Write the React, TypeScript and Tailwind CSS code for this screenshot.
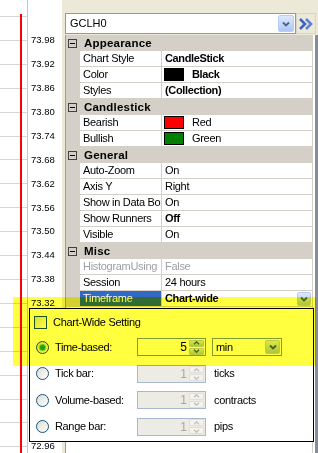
import React from 'react';

type Row =
  | { kind: 'cat'; label: string }
  | {
      kind: 'prop';
      name: string;
      value: string;
      bold?: boolean;
      swatch?: string;
      dim?: boolean;
      selected?: boolean;
      dropdown?: boolean;
    };

const rows: Row[] = [
  { kind: 'cat', label: 'Appearance' },
  { kind: 'prop', name: 'Chart Style', value: 'CandleStick', bold: true },
  { kind: 'prop', name: 'Color', value: 'Black', bold: true, swatch: 'bg-black' },
  { kind: 'prop', name: 'Styles', value: '(Collection)', bold: true },
  { kind: 'cat', label: 'Candlestick' },
  { kind: 'prop', name: 'Bearish', value: 'Red', swatch: 'bg-[#ff0000]' },
  { kind: 'prop', name: 'Bullish', value: 'Green', swatch: 'bg-[#008000]' },
  { kind: 'cat', label: 'General' },
  { kind: 'prop', name: 'Auto-Zoom', value: 'On' },
  { kind: 'prop', name: 'Axis Y', value: 'Right' },
  { kind: 'prop', name: 'Show in Data Box', value: 'On' },
  { kind: 'prop', name: 'Show Runners', value: 'Off', bold: true },
  { kind: 'prop', name: 'Visible', value: 'On' },
  { kind: 'cat', label: 'Misc' },
  { kind: 'prop', name: 'HistogramUsing', value: 'False', dim: true },
  { kind: 'prop', name: 'Session', value: '24 hours' },
  { kind: 'prop', name: 'Timeframe', value: 'Chart-wide', bold: true, selected: true, dropdown: true },
];

const labels = [
  '73.98', '73.92', '73.86', '73.80', '73.74', '73.68', '73.62', '73.56', '73.50',
  '73.44', '73.38', '73.32', '73.26', '73.20', '73.14', '73.08', '73.02', '72.96',
];

function ChevronDown({ color = '#4d6185' }: { color?: string }) {
  return (
    <svg width="8" height="6" viewBox="0 0 8 6">
      <path d="M1 1.5 L4 4.5 L7 1.5" fill="none" stroke={color} strokeWidth="1.8" />
    </svg>
  );
}

function DropButton({ className = '' }: { className?: string }) {
  return (
    <div
      className={`flex items-center justify-center rounded-[2px] border border-[#b9cdf6] bg-linear-to-b from-[#dde8fe] to-[#aec6f6] ${className}`}
    >
      <ChevronDown />
    </div>
  );
}

function SpinButtons({ disabled }: { disabled?: boolean }) {
  const arrow = disabled ? '#c4c2b8' : '#4d6185';
  const box = disabled
    ? 'border-[#e0ded6] bg-[#f4f3ee]'
    : 'border-[#b9cdf6] bg-linear-to-b from-[#dde8fe] to-[#aec6f6]';
  return (
    <div className="flex w-[15px] flex-col gap-px">
      <div className={`flex h-[7px] items-center justify-center rounded-[1px] border ${box}`}>
        <svg width="7" height="4" viewBox="0 0 7 4">
          <path d="M1 3.2 L3.5 0.8 L6 3.2" fill="none" stroke={arrow} strokeWidth="1.4" />
        </svg>
      </div>
      <div className={`flex h-[7px] items-center justify-center rounded-[1px] border ${box}`}>
        <svg width="7" height="4" viewBox="0 0 7 4">
          <path d="M1 0.8 L3.5 3.2 L6 0.8" fill="none" stroke={arrow} strokeWidth="1.4" />
        </svg>
      </div>
    </div>
  );
}

function Radio({ checked }: { checked?: boolean }) {
  return (
    <div className="flex h-[13px] w-[13px] shrink-0 items-center justify-center rounded-full border border-[#1c5180] bg-linear-to-br from-[#dcdcd5] to-[#ffffff]">
      {checked && <div className="h-[5px] w-[5px] rounded-full bg-[#21a121] shadow-[0_0_1px_1px_#63c563]" />}
    </div>
  );
}

function PropRow({ row }: { row: Extract<Row, { kind: 'prop' }> }) {
  return (
    <div className="flex h-[16px] border-b border-[#d4d0c8]">
      <div className="w-[14px] shrink-0 bg-[#d4d0c8]" />
      <div
        className={`w-[81px] shrink-0 overflow-hidden whitespace-nowrap pl-[3px] leading-[15px] tracking-[-0.3px] ${
          row.selected ? 'bg-[#316ac5] text-white' : row.dim ? 'bg-white text-[#a0a0a0]' : 'bg-white text-black'
        }`}
      >
        {row.name}
      </div>
      <div className="w-px shrink-0 bg-[#d4d0c8]" />
      <div className="flex min-w-0 flex-1 items-center bg-white pl-px">
        {row.swatch && <div className={`ml-px h-[13px] w-[20px] shrink-0 border border-black ${row.swatch}`} />}
        <span
          className={`whitespace-nowrap leading-[15px] ${row.swatch ? 'pl-[8px]' : 'pl-[2px]'} ${
            row.bold ? 'font-bold tracking-[-0.35px]' : 'tracking-[-0.3px]'
          } ${row.dim ? 'text-[#a0a0a0]' : 'text-black'}`}
        >
          {row.value}
        </span>
        {row.dropdown && <DropButton className="ml-auto mr-px h-[14px] w-[14px]" />}
      </div>
    </div>
  );
}

function CatRow({ label }: { label: string }) {
  return (
    <div className="flex h-[16px] items-center bg-[#d4d0c8]">
      <div className="ml-[2px] flex h-[9px] w-[9px] shrink-0 items-center justify-center border border-[#404040]">
        <div className="h-px w-[5px] bg-black" />
      </div>
      <span className="pl-[7px] text-[11.5px] font-bold leading-[15px] tracking-[0.2px] text-black">{label}</span>
    </div>
  );
}

function BarRow({
  label,
  value,
  unit,
  checked,
  disabled,
}: {
  label: string;
  value: string;
  unit?: string;
  checked?: boolean;
  disabled?: boolean;
}) {
  return (
    <div className="flex h-[18px] items-center">
      <div className="flex w-[107px] shrink-0 items-center gap-[6px] pl-[6px]">
        <Radio checked={checked} />
        <span className="whitespace-nowrap tracking-[-0.35px]">{label}</span>
      </div>
      <div
        className={`flex h-[18px] w-[69px] items-center justify-end gap-px border pr-px ${
          disabled ? 'border-[#a7b8d0] bg-[#ecebe4] text-[#aca899]' : 'border-[#7f9db9] bg-white text-black'
        }`}
      >
        <span className="pr-[1px] text-[12px]">{value}</span>
        <SpinButtons disabled={disabled} />
      </div>
      {unit && <span className="pl-[8px] tracking-[-0.3px]">{unit}</span>}
      {!unit && (
        <div className="ml-[6px] flex h-[18px] w-[70px] items-center border border-[#7f9db9] bg-white pl-[3px]">
          <span className="tracking-[-0.3px]">min</span>
          <DropButton className="ml-auto mr-px h-[14px] w-[15px]" />
        </div>
      )}
    </div>
  );
}

export default function App() {
  return (
    <div className="relative flex h-[453px] w-[318px] overflow-hidden bg-[#ece9d8] font-['Liberation_Sans',Arial,sans-serif] text-[11px] text-black">
      {/* chart plot + price axis */}
      <div className="flex w-[62px] shrink-0 bg-white">
        <svg width="28" height="453" className="block shrink-0">
          {Array.from({ length: 19 }, (_, k) => (
            <line key={k} x1="0" x2="28" y1={Math.round(16.1 + 23.9 * k) + 0.5} y2={Math.round(16.1 + 23.9 * k) + 0.5} stroke="#d6d6d6" />
          ))}
          <rect x="20" y="14" width="2" height="439" fill="#ff0000" />
          <line x1="27.5" x2="27.5" y1="0" y2="453" stroke="#c8c8c8" />
        </svg>
        <div className="flex flex-col pl-[3px] pt-[28.5px]">
          {labels.map((l) => (
            <div key={l} className="flex h-[23.9px] shrink-0 items-center text-[9.5px]">
              {l}
            </div>
          ))}
        </div>
      </div>

      <div className="w-[3px] shrink-0" />

      {/* properties panel */}
      <div className="flex w-[253px] shrink-0 flex-col">
        <div className="flex h-[35px] shrink-0 pt-[13px]">
          <div className="flex h-[21px] w-[231px] items-center border border-[#7f9db9] bg-white pl-[4px]">
            <span>GCLH0</span>
            <DropButton className="ml-auto mr-px h-[17px] w-[16px]" />
          </div>
          <div className="flex h-[21px] w-[20px] items-center justify-center border border-[#d8d4c6]">
            <svg width="16" height="14" viewBox="0 0 16 14">
              <path d="M2 2 L7 7 L2 12" fill="none" stroke="#3e64c0" strokeWidth="2.6" />
              <path d="M8 2 L13 7 L8 12" fill="none" stroke="#5a82d8" strokeWidth="2.6" />
            </svg>
          </div>
        </div>

        <div className="flex flex-1">
          <div className="flex w-[247px] shrink-0 flex-col border-l border-[#9c9b95] bg-white">
            {rows.map((r, i) =>
              r.kind === 'cat' ? <CatRow key={i} label={r.label} /> : <PropRow key={i} row={r} />,
            )}
          </div>
          <div className="w-px bg-[#d4d0c8]" />
          <div className="w-[2px] bg-white" />
          <div className="w-[3px] bg-[#868d9a]" />
        </div>
      </div>

      {/* timeframe drop-down */}
      <div className="absolute left-[29px] top-[308px] flex h-[134px] w-[285px] flex-col border border-black bg-white pt-[7px]">
        <div className="flex h-[13px] items-center gap-[6px] pl-[4px]">
          <div className="h-[13px] w-[13px] border border-[#1c5180] bg-linear-to-br from-[#dcdcd5] to-[#ffffff]" />
          <span className="tracking-[-0.3px]">Chart-Wide Setting</span>
        </div>
        <div className="mt-[9px] flex flex-col gap-[8.5px]">
          <BarRow label="Time-based:" value="5" checked />
          <BarRow label="Tick bar:" value="1" unit="ticks" disabled />
          <BarRow label="Volume-based:" value="1" unit="contracts" disabled />
          <BarRow label="Range bar:" value="1" unit="pips" disabled />
        </div>
      </div>

      {/* highlighter mark */}
      <div className="pointer-events-none absolute left-[13px] top-[297px] h-[69px] w-[303px] bg-[#ffff40] mix-blend-multiply" />
    </div>
  );
}
